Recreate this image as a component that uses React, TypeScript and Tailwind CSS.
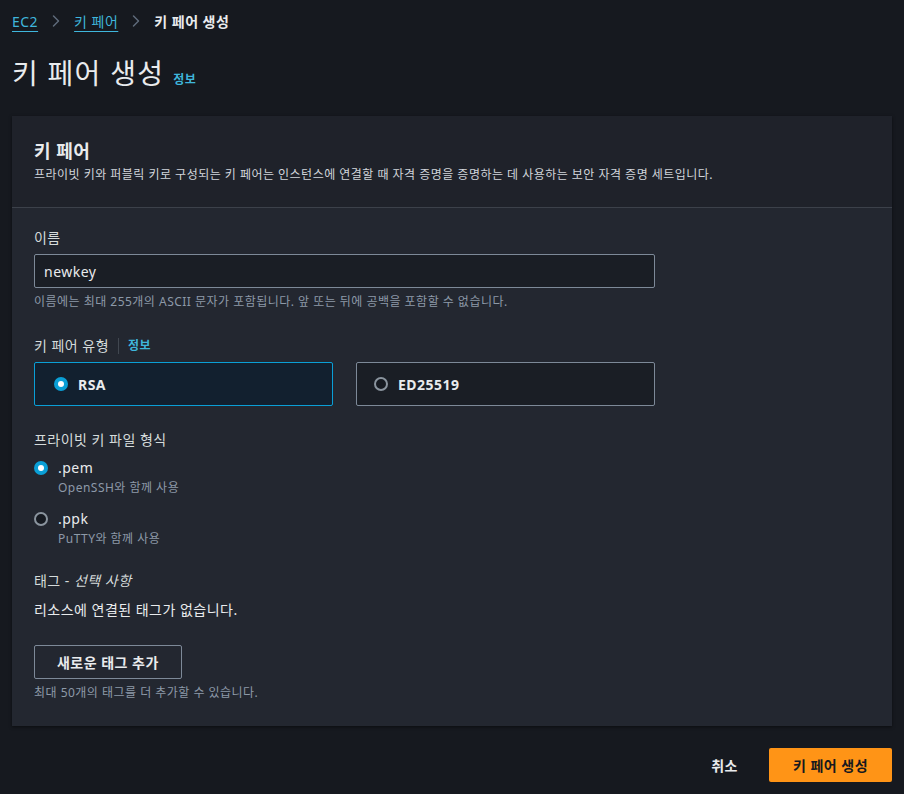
import { ChevronRight } from 'lucide-react'

const FONT = { fontFamily: '"Noto Sans", "Noto Sans CJK KR", sans-serif' }

function Radio({ checked }: { checked: boolean }) {
  return checked ? (
    <span className="w-[14px] h-[14px] rounded-full bg-[#0a9fd6] flex items-center justify-center shrink-0">
      <span className="block w-[6px] h-[6px] rounded-full bg-white" />
    </span>
  ) : (
    <span className="block w-[14px] h-[14px] rounded-full border-2 border-[#8a949e] bg-[#161a21] shrink-0" />
  )
}

function Info() {
  return <span className="text-[#3fb6dc] text-[12px] font-bold">정보</span>
}

export default function App() {
  return (
    <div className="min-h-[794px] bg-[#16191f] text-[#d5dbdb] px-3 pb-[14px] tracking-[0.03em]" style={FONT}>
      {/* Breadcrumb */}
      <div className="flex items-center h-[42px] text-[14px]">
        <span className="text-[#3fb6dc] underline underline-offset-[4px] decoration-1">EC2</span>
        <ChevronRight className="w-[20px] h-[20px] text-[#5f6b7a] mx-[8px]" strokeWidth={1.75} />
        <span className="text-[#3fb6dc] underline underline-offset-[4px] decoration-1">키 페어</span>
        <ChevronRight className="w-[20px] h-[20px] text-[#5f6b7a] mx-[8px]" strokeWidth={1.75} />
        <span className="text-[#e9ebed] font-bold">키 페어 생성</span>
      </div>

      {/* Title */}
      <div className="flex items-baseline gap-[9px] h-[74px] pt-[11px]">
        <h1 className="text-[28px] text-[#e9ebed] leading-[40px] tracking-[0.045em]">키 페어 생성</h1>
        <Info />
      </div>

      {/* Card */}
      <div className="bg-[#232730] shadow-[0_1px_3px_rgba(0,0,0,0.5)]">
        <div className="bg-[#1f222a] px-[22px] pt-[22px] pb-[23px] border-b border-[#3c414a]">
          <h2 className="text-[18px] font-bold text-[#e9ebed] leading-[26px]">키 페어</h2>
          <p className="text-[12px] text-[#d1d5db] mt-[2px] leading-[18px]">
            프라이빗 키와 퍼블릭 키로 구성되는 키 페어는 인스턴스에 연결할 때 자격 증명을 증명하는 데 사용하는 보안 자격 증명 세트입니다.
          </p>
        </div>

        <div className="px-[22px] pt-[19px] pb-[24px]">
          {/* Name */}
          <div className="w-[621px]">
            <label className="block text-[14px] text-[#d5dbdb] leading-[22px]">이름</label>
            <div className="mt-[5px] h-[34px] border border-[#7d8998] rounded-[2px] bg-[#1a1e25] flex items-center px-[9px] text-[14px] text-[#e9ebed]">
              newkey
            </div>
            <p className="text-[12px] text-[#8d99a8] mt-[5px] leading-[18px]">
              이름에는 최대 255개의 ASCII 문자가 포함됩니다. 앞 또는 뒤에 공백을 포함할 수 없습니다.
            </p>
          </div>

          {/* Key pair type */}
          <div className="mt-[24px] w-[621px]">
            <div className="flex items-center text-[14px] leading-[22px]">
              <span>키 페어 유형</span>
              <span className="w-px h-[16px] bg-[#414750] mx-[9px]" />
              <Info />
            </div>
            <div className="grid grid-cols-2 gap-[23px] mt-[5px]">
              <div className="h-[44px] border border-[#0a9fd6] rounded-[2px] bg-[#12202f] flex items-center gap-[10px] px-[19px]">
                <Radio checked />
                <span className="text-[14px] font-bold text-[#e9ebed]">RSA</span>
              </div>
              <div className="h-[44px] border border-[#7d8998] rounded-[2px] bg-[#1a1e25] flex items-center gap-[10px] px-[17px]">
                <Radio checked={false} />
                <span className="text-[14px] font-bold text-[#e9ebed]">ED25519</span>
              </div>
            </div>
          </div>

          {/* File format */}
          <div className="mt-[23px]">
            <label className="block text-[14px] leading-[22px]">프라이빗 키 파일 형식</label>
            <div className="mt-[6px] flex gap-[10px]">
              <div className="pt-[4px]"><Radio checked /></div>
              <div>
                <div className="text-[14px] text-[#e9ebed] leading-[22px]">.pem</div>
                <div className="text-[12px] text-[#8d99a8] leading-[18px]">OpenSSH와 함께 사용</div>
              </div>
            </div>
            <div className="mt-[11px] flex gap-[10px]">
              <div className="pt-[4px]"><Radio checked={false} /></div>
              <div>
                <div className="text-[14px] text-[#e9ebed] leading-[22px]">.ppk</div>
                <div className="text-[12px] text-[#8d99a8] leading-[18px]">PuTTY와 함께 사용</div>
              </div>
            </div>
          </div>

          {/* Tags */}
          <div className="mt-[22px]">
            <div className="text-[14px] leading-[22px]">
              태그 - <i>선택 사항</i>
            </div>
            <p className="text-[14px] text-[#e9ebed] mt-[7px] leading-[22px]">리소스에 연결된 태그가 없습니다.</p>
            <button className="mt-[24px] h-[34px] px-[22px] border border-[#7d8998] rounded-[2px] text-[14px] font-bold text-[#e9ebed] bg-transparent tracking-[0.035em]">
              새로운 태그 추가
            </button>
            <p className="text-[12px] text-[#8d99a8] mt-[5px] leading-[18px]">최대 50개의 태그를 더 추가할 수 있습니다.</p>
          </div>
        </div>
      </div>

      {/* Footer */}
      <div className="flex justify-end items-center gap-[31px] mt-[22px]">
        <button className="text-[14px] font-bold text-[#e9ebed] tracking-[0.035em]">취소</button>
        <button className="h-[34px] w-[123px] bg-[#ff9416] rounded-[2px] text-[14px] font-bold text-[#16191f] tracking-[0.035em]">
          키 페어 생성
        </button>
      </div>
    </div>
  )
}
